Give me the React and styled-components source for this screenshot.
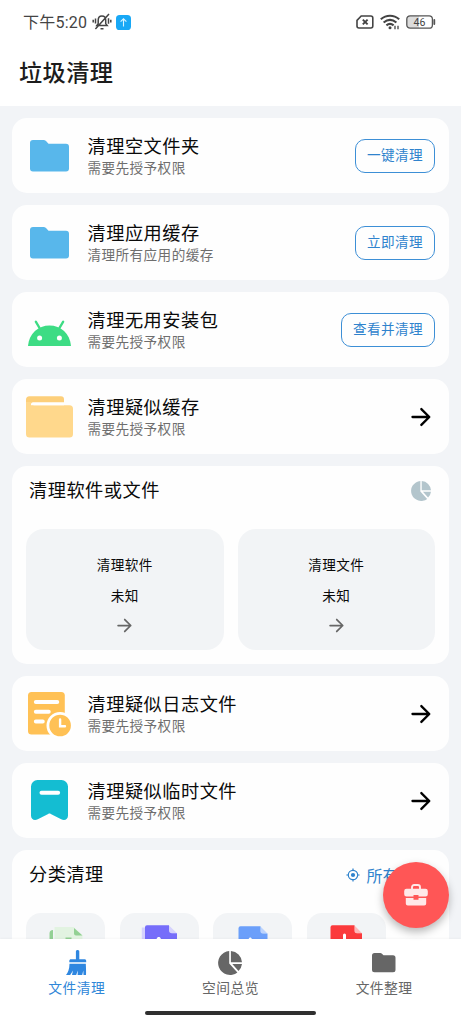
import React from 'react';
import styled, { createGlobalStyle } from 'styled-components';

const GlobalStyle = createGlobalStyle`
  * {
    box-sizing: border-box;
  }

  body {
    margin: 0;
    font-family: Roboto, 'Noto Sans CJK SC', sans-serif;
    color: #0a0a0a;
  }
`;

const Screen = styled.div`
  position: relative;
  display: flex;
  flex-direction: column;
  width: 461px;
  height: 1024px;
  overflow: hidden;
  background: #f2f4f7;
`;

const Header = styled.header`
  flex: none;
  height: 105.5px;
  background: #fff;
`;

const StatusBar = styled.div`
  display: flex;
  align-items: center;
  justify-content: space-between;
  height: 44px;
  padding: 0 25px 0 23px;
`;

const StatusGroup = styled.div`
  display: flex;
  align-items: center;
  gap: ${({ $gap }) => $gap}px;
`;

const Time = styled.span`
  padding-top: 1px;
  font-size: 16px;
  line-height: 20px;
  letter-spacing: 0.25px;
  color: #444;
`;

const PageTitle = styled.h1`
  margin: 12px 0 0 19px;
  font-size: 23.2px;
  font-weight: 500;
  line-height: 35px;
  letter-spacing: 0.4px;
  color: #1c1c1c;
`;

const Content = styled.main`
  display: flex;
  flex: 1;
  flex-direction: column;
  gap: 12px;
  min-height: 0;
  padding: 12.6px 12px 0;
  overflow: hidden;
`;

const Card = styled.section`
  flex: none;
  background: #fefefe;
  border-radius: 15px;
`;

const RowCard = styled(Card)`
  display: flex;
  align-items: center;
  height: 75px;
  padding-right: 14px;
`;

const IconBox = styled.div`
  display: flex;
  flex: none;
  justify-content: center;
  width: 76px;
  margin-right: -0.5px;
`;

const RowText = styled.div`
  flex: 1;
`;

const RowTitle = styled.div`
  font-size: 18.2px;
  line-height: 26px;
  letter-spacing: 0.5px;
`;

const RowHint = styled.div`
  margin-top: -1px;
  padding-bottom: 1px;
  font-size: 13.6px;
  line-height: 18px;
  letter-spacing: 0.43px;
  color: #6e6e6e;
`;

const ActionButton = styled.button`
  height: 34px;
  padding: 0 11px;
  border: 1.3px solid #3d8fd6;
  border-radius: 10px;
  background: transparent;
  font-family: inherit;
  font-size: 13.6px;
  line-height: 19px;
  letter-spacing: 0.43px;
  color: #2f83cd;
`;

const ArrowBox = styled.div`
  display: flex;
`;

const SectionHead = styled.div`
  display: flex;
  align-items: center;
  justify-content: space-between;
  height: 50px;
  padding: 0 18.5px 0 17px;
`;

const ToolCard = styled(Card)`
  height: 198.3px;
`;

const Tiles = styled.div`
  display: grid;
  grid-template-columns: 1fr 1fr;
  gap: 14px;
  padding: 13px 14px 0;
`;

const Tile = styled.div`
  display: flex;
  flex-direction: column;
  align-items: center;
  height: 121px;
  padding-top: 25.6px;
  border-radius: 18px;
  background: #f2f4f6;
`;

const TileText = styled.div`
  margin-bottom: 11px;
  font-size: 13.6px;
  line-height: 20px;
  letter-spacing: 0.4px;

  &:nth-child(2) {
    margin-bottom: 9px;
  }
`;

const CategoryCard = styled(Card)`
  height: 220px;
`;

const AllLink = styled.div`
  display: flex;
  align-items: center;
  gap: 6px;
  font-size: 16px;
  color: #2f83cd;
`;

const Categories = styled.div`
  display: flex;
  gap: 14.5px;
  padding: 13px 14px 0;
`;

const Category = styled.div`
  display: flex;
  justify-content: center;
  width: 79px;
  height: 79px;
  padding-top: 12px;
  border-radius: 15px;
  background: #f2f4f6;
`;

const Nav = styled.nav`
  position: relative;
  display: flex;
  flex: none;
  flex-wrap: wrap;
  justify-content: center;
  align-content: flex-start;
  height: 85px;
  background: #fff;
  box-shadow: 0 -1px 2px rgba(0, 0, 0, 0.03);
`;

const NavItem = styled.div`
  display: flex;
  flex-direction: column;
  align-items: center;
  width: 33.33%;
  height: 72px;
  padding-top: 11px;
  font-size: 13.8px;
  line-height: 20px;
  letter-spacing: 0.45px;
  color: ${({ $active }) => ($active ? '#2f87d8' : '#666')};

  svg {
    margin-bottom: 2px;
  }
`;

const HomeBar = styled.div`
  width: 171px;
  height: 4px;
  border-radius: 2px;
  background: #2f2f2f;
`;

const Fab = styled.button`
  position: absolute;
  right: 12px;
  bottom: 96px;
  display: flex;
  align-items: center;
  justify-content: center;
  width: 66px;
  height: 66px;
  padding: 0;
  border: 0;
  border-radius: 50%;
  background: #ff5656;
  box-shadow: 0 4px 8px rgba(0, 0, 0, 0.28);
`;

const MuteIcon = () => (
  <svg width="20" height="18" viewBox="0 0 20 18" fill="none" stroke="#444" strokeWidth="1.5">
    <path d="M4.8 12.6h10.4l-1.5-2V7.2c0-2.5-1.5-4.1-3.8-4.1S6.2 4.7 6.2 7.2v3.4zM8.5 15.8h3M17 1 3.4 16" />
    <path d="M3.5 5.5v5M1.2 6.8v2.6M16.5 5.2v5.6M18.8 6.8v2.6" />
  </svg>
);

const UploadBadge = () => (
  <svg width="15" height="15" viewBox="0 0 15 15">
    <rect width="15" height="15" rx="3.6" fill="#18a8f6" />
    <path d="M7.5 11.6V4M4.6 6.7l2.9-2.9 2.9 2.9" fill="none" stroke="#d9f3ff" strokeWidth="1.1" />
  </svg>
);

const SimIcon = () => (
  <svg width="18" height="14" viewBox="0 0 18 14" fill="none" stroke="#444" strokeWidth="1.6">
    <path d="M5.2 1h9.6a2 2 0 0 1 2 2v8a2 2 0 0 1-2 2H3a2 2 0 0 1-2-2V5.4z" />
    <path d="m6.8 4.6 4.8 4.8M11.6 4.6 6.8 9.4" strokeWidth="1.9" />
  </svg>
);

const WifiIcon = () => (
  <svg width="20" height="16" viewBox="0 0 20 16" fill="none" stroke="#444" strokeWidth="2.1">
    <path d="M.8 5.3C6.2.6 13.8.6 19.2 5.3M3.6 8.5c4-3.3 8.8-3.3 12.8 0M6.4 11.4c2.3-1.9 4.9-1.9 7.2 0" />
    <circle cx="10" cy="13.8" r="1.5" fill="#444" stroke="none" />
    <path d="M15 11.8v3.4M18 15.2v-3.4" strokeWidth="1.3" />
  </svg>
);

const BatteryIcon = () => (
  <svg width="30" height="14" viewBox="0 0 30 14">
    <path d="M4 1h9v12H4a3 3 0 0 1-3-3V4a3 3 0 0 1 3-3z" fill="#dcdcdc" />
    <rect x=".8" y=".8" width="25.6" height="12.4" rx="3.3" fill="none" stroke="#555" strokeWidth="1.3" />
    <path d="M28.3 5v4" stroke="#555" strokeWidth="1.8" strokeLinecap="round" />
    <text x="13.5" y="10.7" textAnchor="middle" fontFamily="Roboto, sans-serif" fontSize="10.5" fill="#444">
      46
    </text>
  </svg>
);

const BlueFolder = () => (
  <svg width="48" height="48" viewBox="0.5 0 48 48">
    <path
      d="M7.5 8H18c1 0 1.8.3 2.5 1l2.5 2.7h17.5a3 3 0 0 1 3 3v21.8a3 3 0 0 1-3 3h-33a3 3 0 0 1-3-3V11a3 3 0 0 1 3-3z"
      fill="#58b7eb"
    />
  </svg>
);

const AndroidIcon = () => (
  <svg width="48" height="48" viewBox="0.5 0 48 48">
    <path d="m10.3 15.7 4.7 8M37.7 15.7l-4.7 8" stroke="#3ddc84" strokeWidth="2.3" strokeLinecap="round" />
    <path d="M2.5 40C3.5 27.5 12.8 19.5 24 19.5S44.5 27.5 45.5 40z" fill="#3ddc84" />
    <circle cx="14.1" cy="32" r="2.5" fill="#fff" />
    <circle cx="33.9" cy="32" r="2.5" fill="#fff" />
  </svg>
);

const YellowFolder = () => (
  <svg width="48" height="48" viewBox="0.5 0 48 48">
    <path d="M4 3.3h31.5a3 3 0 0 1 3 3v4H8v8H.5V6.8A3.500 3.500 0 0 1 4 3.300z" fill="#fdcf7a" />
    <path d="M.5 9h5v3.300H44a3.500 3.500 0 0 1 3.500 3.500V41a3.500 3.500 0 0 1-3.500 3.500H4A3.500 3.500 0 0 1 .5 41z" fill="#ffd88c" />
    <path d="M38.5 9.3h-31c-1.200 0-2 .8-2 2v1h33z" fill="#fff" />
  </svg>
);

const LogIcon = () => (
  <svg width="48" height="48" viewBox="0.5 0 48 48" strokeLinecap="round" fill="none">
    <rect x="2.5" y="2" width="36.8" height="42.5" rx="3.5" fill="#ffc155" />
    <path d="M10.3 12h21.5M10.3 21.7h13M10.3 31.5h7" stroke="#fff" strokeWidth="3.9" />
    <circle cx="34.6" cy="35.5" r="12.2" fill="#ffc155" stroke="#fff" strokeWidth="2.8" />
    <path d="M34.6 29.5v6.7h4.9" stroke="#fff" strokeWidth="2.4" />
  </svg>
);

const BookmarkIcon = () => (
  <svg width="48" height="48" viewBox="0.5 0 48 48">
    <path
      d="M12 3h24a6.5 6.5 0 0 1 6.5 6.5v29c0 4-3.5 5.6-6.8 3.8l-10.400-5.400c-.9-.5-1.700-.5-2.600 0l-10.400 5.400C9 44.100 5.500 42.500 5.500 38.500v-29A6.500 6.500 0 0 1 12 3z"
      fill="#14bdd2"
    />
    <path d="M16 15.8h16.6" stroke="#fff" strokeWidth="4" strokeLinecap="round" />
  </svg>
);

const ArrowIcon = ({ size, color, stroke = 2 }) => (
  <svg
    width={size}
    height={size}
    viewBox="0 0 24 24"
    fill="none"
    stroke={color}
    strokeWidth={stroke}
    strokeLinecap="round"
    strokeLinejoin="round"
  >
    <path d="M4.7 12H19M12.3 5.2l6.800 6.800-6.800 6.800" />
  </svg>
);

const PieIcon = ({ size, pad = 0, color }) => (
  <svg width={size} height={size} viewBox={`${-pad} ${-pad} ${24 + pad * 2} ${24 + pad * 2}`} fill={color}>
    <path d="M11.2 0v12.6l8.2 8.900A12 12 0 1 1 11.200 0z" />
    <path d="M12.9 0A12 12 0 0 1 24 11.200H12.900zM14.300 12.900H24a12 12 0 0 1-3.500 7z" />
  </svg>
);

const BroomIcon = () => (
  <svg width="26" height="26" viewBox="0 0 26 26" fill="#2f87e0">
    <path d="M11.9 1.400c0-1.900 3.400-1.900 3.400 0v7.800h5.200c1 0 1.700.7 1.700 1.700v1.400H5.300v-1.400c0-1 .7-1.700 1.700-1.700h4.900z" />
    <path d="M5.5 13.800h16.300c.2 4 .4 8 .2 11.200h-2.500l-.2-4.500-1.100 4.500h-4.600l.2-4.500L12.200 25H8l1-4.500L6.200 25H2c2-2 3.400-6 3.500-11.200z" />
  </svg>
);

const GreyFolder = () => (
  <svg width="26" height="26" viewBox="0 0 26 26">
    <path
      d="M3.5 3h5.700c.8 0 1.400.3 2 .9l1.300 1.400H22a2.500 2.500 0 0 1 2.500 2.500v12a2.500 2.500 0 0 1-2.500 2.500H3.500A2.500 2.500 0 0 1 1 19.800V5.500A2.500 2.500 0 0 1 3.500 3z"
      fill="#666"
    />
  </svg>
);

const TargetIcon = () => (
  <svg width="14" height="14" viewBox="0 0 14 14" fill="none" stroke="#2f83cd" strokeWidth="1.2">
    <circle cx="7" cy="7" r="4.7" />
    <circle cx="7" cy="7" r="2.1" fill="#2f83cd" stroke="none" />
    <path d="M7 .4v2M7 11.6v2M.4 7h2M11.6 7h2" />
  </svg>
);

const ToolboxIcon = () => (
  <svg width="24" height="22" viewBox="0 0 24 22">
    <path d="M8 5V3.200C8 1.900 8.900 1 10.200 1h3.600C15.100 1 16 1.900 16 3.200V5" fill="none" stroke="#ffe9e9" strokeWidth="1.9" />
    <path
      d="M2.500 4.800h19A2.300 2.300 0 0 1 23.800 7v3.200a2.300 2.300 0 0 1-2.300 2.300h-7V11h-5v1.500h-7a2.300 2.300 0 0 1-2.300-2.300V7a2.300 2.300 0 0 1 2.300-2.200z"
      fill="#ffe9e9"
    />
    <path d="M1.800 14h7.700v1.800h5V14h7.700v5.500a2 2 0 0 1-2 2H3.800a2 2 0 0 1-2-2z" fill="#ffe9e9" />
  </svg>
);

const TextFileIcon = () => (
  <svg width="36" height="40" viewBox="0 0 36 40">
    <path d="M6.5 2h19l9 8.500V36a3 3 0 0 1-3 3h-25z" fill="#e2f3e1" />
    <path d="M5 5a3.500 3.500 0 0 0-3.500 3.500V36A3 3 0 0 0 4.500 39H5zM26 3l8.500 7.500H28a2 2 0 0 1-2-2zM17.500 12.500h6V15h-6z" fill="#93d194" />
  </svg>
);

const VideoFileIcon = () => (
  <svg width="36" height="40" viewBox="0 0 36 40">
    <path d="M.8 2.500h6V36h-6zM28 .5l8 7.700h-5a3 3 0 0 1-3-3z" fill="#d5d2fd" />
    <path d="M6 .2h22v5a3 3 0 0 0 3 3h5V36a3 3 0 0 1-3 3H7a3 3 0 0 1-3-3V2.200a2 2 0 0 1 2-2z" fill="#766dfa" />
    <path d="M15.500 15c0-4 4.500-4 4.500 0z" fill="#fff" />
  </svg>
);

const ImageFileIcon = () => (
  <svg width="36" height="40" viewBox="0 0 36 40">
    <path d="m25.500 1.500 7 7H28a2.500 2.500 0 0 1-2.500-2.500z" fill="#bcd3fd" />
    <path d="M5.500 1.300h20V6A2.500 2.500 0 0 0 28 8.500h4.500V36a3 3 0 0 1-3 3h-23a3 3 0 0 1-3-3V3.300a2 2 0 0 1 2-2z" fill="#6b9ffa" />
    <path d="M13.500 15c0-3.500 3.500-3.500 3.500 0z" fill="#fff" />
  </svg>
);

const PdfFileIcon = () => (
  <svg width="36" height="40" viewBox="0 0 36 40">
    <path d="m26.500.5 7.500 7.700h-5a2.500 2.500 0 0 1-2.500-2.500z" fill="#fdb9ba" />
    <path d="M4.500.2h22v5.500a2.500 2.500 0 0 0 2.500 2.500h5V36a3 3 0 0 1-3 3H5.500a3 3 0 0 1-3-3V2.200a2 2 0 0 1 2-2z" fill="#fb3a3c" />
    <path d="M16.500 10v7" stroke="#fff" strokeWidth="3" strokeLinecap="round" />
  </svg>
);

const junkRows = [
  { title: '清理空文件夹', hint: '需要先授予权限', icon: <BlueFolder />, action: '一键清理' },
  { title: '清理应用缓存', hint: '清理所有应用的缓存', icon: <BlueFolder />, action: '立即清理' },
  { title: '清理无用安装包', hint: '需要先授予权限', icon: <AndroidIcon />, action: '查看并清理' },
  { title: '清理疑似缓存', hint: '需要先授予权限', icon: <YellowFolder /> },
];

const suspectRows = [
  { title: '清理疑似日志文件', hint: '需要先授予权限', icon: <LogIcon /> },
  { title: '清理疑似临时文件', hint: '需要先授予权限', icon: <BookmarkIcon /> },
];

const tools = ['清理软件', '清理文件'];

const categoryIcons = [TextFileIcon, VideoFileIcon, ImageFileIcon, PdfFileIcon];

const CleanRow = ({ title, hint, icon, action }) => (
  <RowCard>
    <IconBox>{icon}</IconBox>
    <RowText>
      <RowTitle>{title}</RowTitle>
      <RowHint>{hint}</RowHint>
    </RowText>
    {action ? (
      <ActionButton>{action}</ActionButton>
    ) : (
      <ArrowBox>
        <ArrowIcon size={28} color="#000" />
      </ArrowBox>
    )}
  </RowCard>
);

const App = () => (
  <>
    <GlobalStyle />
    <Screen>
      <Header>
        <StatusBar>
          <StatusGroup $gap={4.5}>
            <Time>下午5:20</Time>
            <MuteIcon />
            <UploadBadge />
          </StatusGroup>
          <StatusGroup $gap={6}>
            <SimIcon />
            <WifiIcon />
            <BatteryIcon />
          </StatusGroup>
        </StatusBar>
        <PageTitle>垃圾清理</PageTitle>
      </Header>

      <Content>
        {junkRows.map(row => (
          <CleanRow key={row.title} {...row} />
        ))}

        <ToolCard>
          <SectionHead>
            <RowTitle>清理软件或文件</RowTitle>
            <PieIcon size={20} color="#b3c5cc" />
          </SectionHead>
          <Tiles>
            {tools.map(tool => (
              <Tile key={tool}>
                <TileText>{tool}</TileText>
                <TileText>未知</TileText>
                <ArrowIcon size={21} color="#666" />
              </Tile>
            ))}
          </Tiles>
        </ToolCard>

        {suspectRows.map(row => (
          <CleanRow key={row.title} {...row} />
        ))}

        <CategoryCard>
          <SectionHead>
            <RowTitle>分类清理</RowTitle>
            <AllLink>
              <TargetIcon />
              所有文件
            </AllLink>
          </SectionHead>
          <Categories>
            {categoryIcons.map((Icon, index) => (
              <Category key={index}>
                <Icon />
              </Category>
            ))}
          </Categories>
        </CategoryCard>
      </Content>

      <Nav>
        <NavItem $active>
          <BroomIcon />
          文件清理
        </NavItem>
        <NavItem>
          <PieIcon size={26} pad={1} color="#666" />
          空间总览
        </NavItem>
        <NavItem>
          <GreyFolder />
          文件整理
        </NavItem>
        <HomeBar />
      </Nav>

      <Fab>
        <ToolboxIcon />
      </Fab>
    </Screen>
  </>
);

export default App;
